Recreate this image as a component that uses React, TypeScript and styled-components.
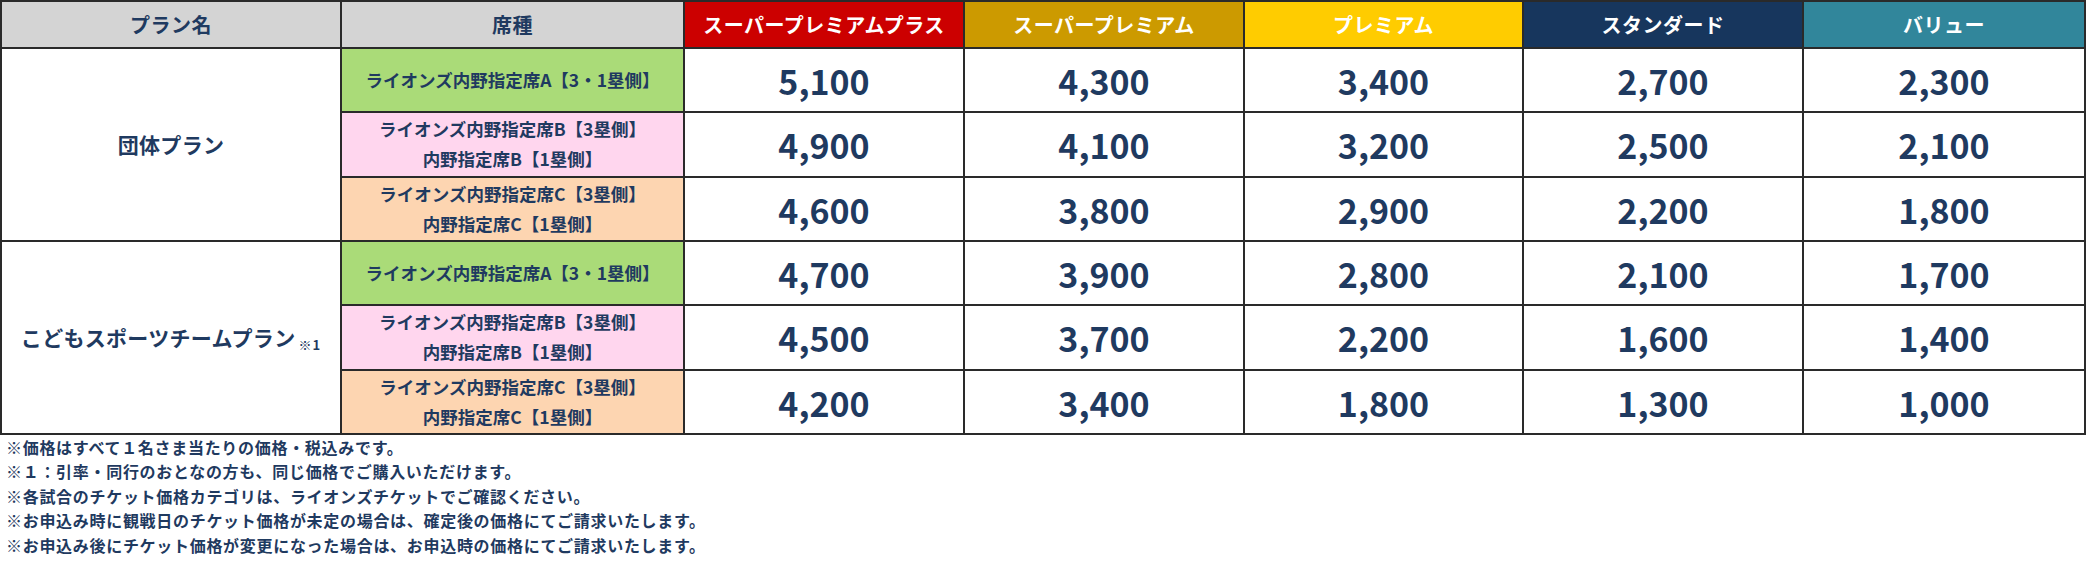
import React from 'react';
import styled, { createGlobalStyle } from 'styled-components';

const GlobalStyle = createGlobalStyle`
  html, body {
    margin: 0;
    padding: 0;
    background: #ffffff;
  }
  body {
    font-family: "Noto Sans CJK JP", "Noto Sans", sans-serif;
    color: #1f3a60;
  }
`;

const NAVY_TEXT = '#1f3a60';

const Page = styled.div`
  width: 2088px;
  height: 562px;
  overflow: hidden;
  background: #ffffff;
`;

const PriceGrid = styled.div`
  display: grid;
  width: 2086px;
  box-sizing: border-box;
  grid-template-columns: 338px 341px 278px 278px 277px 278px 280px;
  grid-template-rows: 45px repeat(6, 62.33px);
  gap: 2px;
  padding: 2px;
  background: #2a2a2a;
`;

const HeadCell = styled.div<{ $bg: string; $light?: boolean }>`
  display: flex;
  align-items: center;
  justify-content: center;
  background: ${(p) => p.$bg};
  color: ${(p) => (p.$light ? '#ffffff' : NAVY_TEXT)};
  font-size: 20px;
  font-weight: 700;
  letter-spacing: 0.5px;
`;

const PlanCell = styled.div`
  grid-row: span 3;
  display: flex;
  align-items: center;
  justify-content: center;
  background: #ffffff;
  color: ${NAVY_TEXT};
  font-size: 21px;
  font-weight: 700;
  letter-spacing: 0.3px;
`;

const Note = styled.span`
  font-size: 13px;
  position: relative;
  top: 7px;
  margin-left: 3px;
  letter-spacing: 1px;
`;

const SeatCell = styled.div<{ $bg: string }>`
  display: flex;
  flex-direction: column;
  align-items: center;
  justify-content: center;
  background: ${(p) => p.$bg};
  color: ${NAVY_TEXT};
  font-size: 17.5px;
  font-weight: 700;
  line-height: 30px;
  text-align: center;
`;

const PriceCell = styled.div`
  display: flex;
  align-items: center;
  justify-content: center;
  background: #ffffff;
  color: ${NAVY_TEXT};
  font-size: 34px;
  font-weight: 700;
  padding-top: 1px;
`;

const Footnotes = styled.div`
  padding: 0 0 0 6px;
`;

const FootLine = styled.div`
  font-size: 16px;
  font-weight: 700;
  line-height: 24.5px;
  letter-spacing: 0.7px;
  color: ${NAVY_TEXT};
`;

const headers = [
  { label: 'プラン名', bg: '#d4d4d4' },
  { label: '席種', bg: '#d4d4d4' },
  { label: 'スーパープレミアムプラス', bg: '#cc0000', light: true },
  { label: 'スーパープレミアム', bg: '#cc9a00', light: true },
  { label: 'プレミアム', bg: '#ffcc00', light: true },
  { label: 'スタンダード', bg: '#17365d', light: true },
  { label: 'バリュー', bg: '#31869b', light: true },
];

const seats = [
  { lines: ['ライオンズ内野指定席A【3・1塁側】'], bg: '#aadb78' },
  { lines: ['ライオンズ内野指定席B【3塁側】', '内野指定席B【1塁側】'], bg: '#ffd6ee' },
  { lines: ['ライオンズ内野指定席C【3塁側】', '内野指定席C【1塁側】'], bg: '#fdd5b1' },
];

const plans = [
  {
    name: '団体プラン',
    note: null as string | null,
    prices: [
      ['5,100', '4,300', '3,400', '2,700', '2,300'],
      ['4,900', '4,100', '3,200', '2,500', '2,100'],
      ['4,600', '3,800', '2,900', '2,200', '1,800'],
    ],
  },
  {
    name: 'こどもスポーツチームプラン',
    note: '※1',
    prices: [
      ['4,700', '3,900', '2,800', '2,100', '1,700'],
      ['4,500', '3,700', '2,200', '1,600', '1,400'],
      ['4,200', '3,400', '1,800', '1,300', '1,000'],
    ],
  },
];

const notes = [
  '※価格はすべて１名さま当たりの価格・税込みです。',
  '※１：引率・同行のおとなの方も、同じ価格でご購入いただけます。',
  '※各試合のチケット価格カテゴリは、ライオンズチケットでご確認ください。',
  '※お申込み時に観戦日のチケット価格が未定の場合は、確定後の価格にてご請求いたします。',
  '※お申込み後にチケット価格が変更になった場合は、お申込時の価格にてご請求いたします。',
];

export default function App() {
  return (
    <Page>
      <GlobalStyle />
      <PriceGrid>
        {headers.map((h) => (
          <HeadCell key={h.label} $bg={h.bg} $light={h.light}>
            {h.label}
          </HeadCell>
        ))}
        {plans.map((plan) =>
          plan.prices.map((row, i) => (
            <React.Fragment key={plan.name + i}>
              {i === 0 && (
                <PlanCell>
                  {plan.name}
                  {plan.note && <Note>{plan.note}</Note>}
                </PlanCell>
              )}
              <SeatCell $bg={seats[i].bg}>
                {seats[i].lines.map((l) => (
                  <div key={l}>{l}</div>
                ))}
              </SeatCell>
              {row.map((p, j) => (
                <PriceCell key={j}>{p}</PriceCell>
              ))}
            </React.Fragment>
          ))
        )}
      </PriceGrid>
      <Footnotes>
        {notes.map((n) => (
          <FootLine key={n}>{n}</FootLine>
        ))}
      </Footnotes>
    </Page>
  );
}
